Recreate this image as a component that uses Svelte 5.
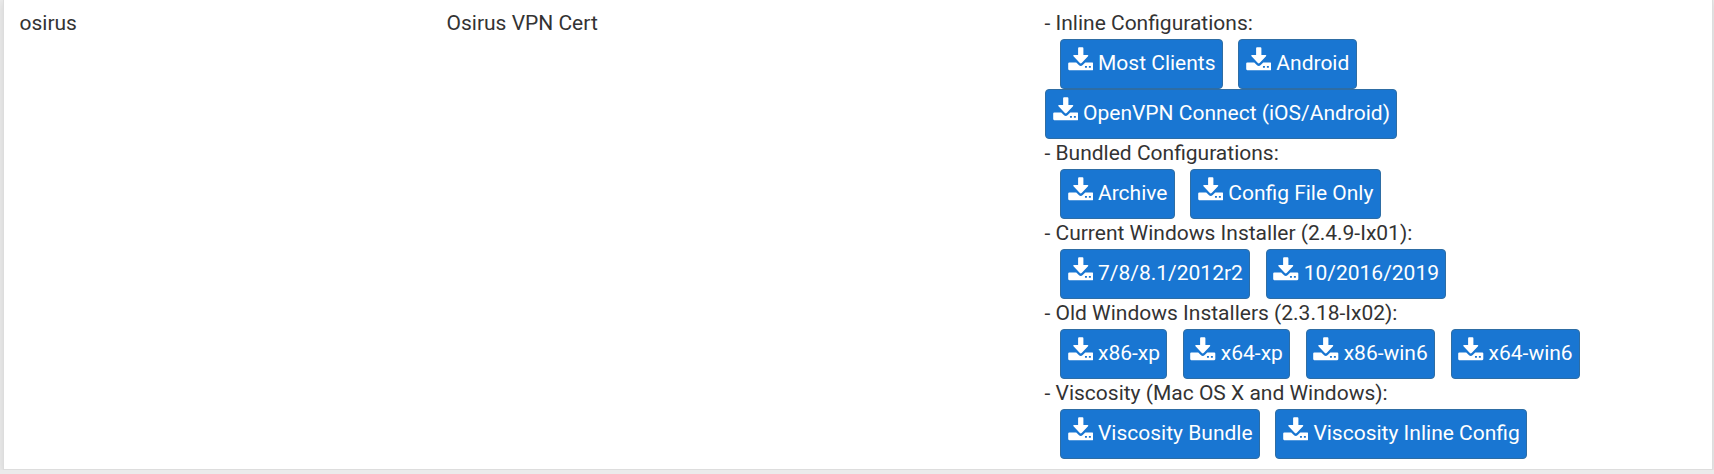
<script lang="ts">
  type Group = { title: string; rows: string[][] };

  const groups: Group[] = [
    {
      title: "Inline Configurations",
      rows: [["Most Clients", "Android"], ["OpenVPN Connect (iOS/Android)"]],
    },
    {
      title: "Bundled Configurations",
      rows: [["Archive", "Config File Only"]],
    },
    {
      title: "Current Windows Installer (2.4.9-Ix01)",
      rows: [["7/8/8.1/2012r2", "10/2016/2019"]],
    },
    {
      title: "Old Windows Installers (2.3.18-Ix02)",
      rows: [["x86-xp", "x64-xp", "x86-win6", "x64-win6"]],
    },
    {
      title: "Viscosity (Mac OS X and Windows)",
      rows: [["Viscosity Bundle", "Viscosity Inline Config"]],
    },
  ];
</script>

<div class="panel">
  <div class="user">osirus</div>
  <div class="cert">Osirus VPN Cert</div>
  <div class="exports">
    {#each groups as group}
      <div class="title">- {group.title}:</div>
      {#each group.rows as row, i}
        <div class="row" class:wrapped={i > 0}>
          {#each row as label}
            <button class="btn">
              <svg viewBox="0 0 26 24" aria-hidden="true">
                <path
                  fill="currentColor"
                  d="M10.300 1Q10.300 0 11.300 0h3.400q1 0 1 1v7h4.200q1.300.1.5 1.200l-6.500 6.900q-.9.900-1.800 0L5.600 9.200Q4.800 8.100 6.100 8h4.200zM1.300 15.600h7.100l2.600 2.600q2 1.900 4 0l2.600-2.600h7.100q1.100 0 1.100 1.100v5.600q0 1.100-1.100 1.100H1.300q-1.100 0-1.100-1.100v-5.600q0-1.100 1.100-1.100z"
                />
                <path class="lights" d="M17.300 19.100h2v1.900h-2zM21.300 19.100h2v1.900h-2z" />
              </svg>
              <span>{label}</span>
            </button>
          {/each}
        </div>
      {/each}
    {/each}
  </div>
</div>

<style>
  :global(body) {
    background: #ebebeb;
    overflow: hidden;
  }

  .panel {
    box-sizing: border-box;
    display: grid;
    grid-template-columns: 427px 598px 1fr;
    width: 1710px;
    height: 470px;
    margin-left: 3px;
    padding: 8px 0 0 15.5px;
    background: #fff;
    border: 1px solid #ddd;
    border-top: 0;
    box-shadow: 0 2px 8px rgba(0, 0, 0, 0.1);
    color: #333;
    font-family: Roboto, sans-serif;
    font-size: 21px;
    line-height: 30px;
  }

  .title {
    height: 30px;
    white-space: pre;
  }

  .row {
    box-sizing: border-box;
    display: flex;
    gap: 15.6px;
    height: 50px;
    padding: 1px 0 0 15.5px;
  }

  .row.wrapped {
    padding-left: 0.5px;
  }

  .btn {
    box-sizing: border-box;
    display: flex;
    flex: none;
    align-items: flex-start;
    gap: 5px;
    height: 50px;
    padding: 7px 6.2px 0 6.5px;
    border: 1px solid #2e6da4;
    border-radius: 4px;
    background: #1976d2;
    color: #fff;
    font: inherit;
    white-space: nowrap;
  }

  .btn span {
    padding-top: 1px;
  }

  svg {
    width: 25.5px;
    height: 24px;
  }

  .lights {
    fill: #1976d2;
  }
</style>
